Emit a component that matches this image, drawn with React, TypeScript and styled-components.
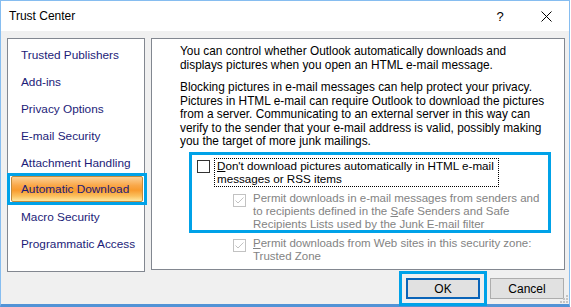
import styled, { createGlobalStyle } from 'styled-components';

const GlobalStyle = createGlobalStyle`
  html, body {
    margin: 0;
    background: #ffffff;
  }
  body {
    font-family: 'Liberation Sans', Arial, sans-serif;
    font-size: 12px;
    color: #000000;
  }
`;

const categories = [
  'Trusted Publishers',
  'Add-ins',
  'Privacy Options',
  'E-mail Security',
  'Attachment Handling',
  'Automatic Download',
  'Macro Security',
  'Programmatic Access',
];

const Checkbox = ({ checked, disabled }: { checked?: boolean; disabled?: boolean }) => (
  <Box $disabled={disabled}>
    {checked && (
      <svg width='11' height='11' viewBox='0 0 11 11'>
        <path d='M1.5 5.5 L4 8 L9.5 2.5' fill='none' stroke={disabled ? '#c2c2c2' : '#222'} strokeWidth='1' />
      </svg>
    )}
  </Box>
);

const App = () => {
  return (
    <>
      <GlobalStyle />
      <Window>
        <TitleBar>
          <Title>Trust Center</Title>
          <Controls>
            <CaptionButton>?</CaptionButton>
            <CaptionButton>
              <svg width='11' height='11' viewBox='0 0 11 11'>
                <path d='M0.5 0.5 L10.5 10.5 M10.5 0.5 L0.5 10.5' stroke='#000' strokeWidth='1' />
              </svg>
            </CaptionButton>
          </Controls>
        </TitleBar>

        <Body>
          <Panels>
            <CategoryList>
              {categories.map(name => (
                <Category key={name} $selected={name === 'Automatic Download'}>
                  {name}
                </Category>
              ))}
            </CategoryList>

            <Settings>
              <Paragraph>
                You can control whether Outlook automatically downloads and
                <br />
                displays pictures when you open an HTML e-mail message.
              </Paragraph>
              <Paragraph $gap={9}>
                Blocking pictures in e-mail messages can help protect your privacy.
                <br />
                Pictures in HTML e-mail can require Outlook to download the pictures
                <br />
                from a server. Communicating to an external server in this way can
                <br />
                verify to the sender that your e-mail address is valid, possibly making
                <br />
                you the target of more junk mailings.
              </Paragraph>

              <Highlight>
                <OptionRow>
                  <Checkbox />
                  <FocusLabel>
                    <u>D</u>on't download pictures automatically in HTML e-mail
                    <br />
                    messages or RSS items
                  </FocusLabel>
                </OptionRow>
                <OptionRow $indent={36} $gap={5}>
                  <Checkbox checked disabled />
                  <OptionLabel $disabled>
                    Permit downloads in e-mail messages from senders and
                    <br />
                    to recipients defined in the <u>S</u>afe Senders and Safe
                    <br />
                    Recipients Lists used by the Junk E-mail filter
                  </OptionLabel>
                </OptionRow>
              </Highlight>

              <OptionRow $indent={53} $gap={7}>
                <Checkbox checked disabled />
                <OptionLabel $disabled>
                  <u>P</u>ermit downloads from Web sites in this security zone:
                  <br />
                  Trusted Zone
                </OptionLabel>
              </OptionRow>
            </Settings>
          </Panels>

          <ButtonRow>
            <Button $default>OK</Button>
            <Button>Cancel</Button>
          </ButtonRow>
        </Body>

        <SizeGrip>
          <svg width='10' height='10' viewBox='0 0 10 10'>
            {[
              [8, 2],
              [5, 5],
              [8, 5],
              [2, 8],
              [5, 8],
              [8, 8],
            ].map(([x, y]) => (
              <rect key={`${x}-${y}`} x={x} y={y} width='2' height='2' fill='#c4c4c4' />
            ))}
          </svg>
        </SizeGrip>
      </Window>
    </>
  );
};

const Window = styled.div`
  position: relative;
  box-sizing: border-box;
  width: 570px;
  height: 307px;
  display: flex;
  flex-direction: column;
  background: #f0f0f0;
  border: 1px solid #86bdf0;
  border-bottom: 3px solid #5293d6;
`;

const TitleBar = styled.div`
  height: 30px;
  display: flex;
  align-items: center;
  justify-content: space-between;
  background: #ffffff;
  padding-left: 8px;
`;

const Title = styled.span`
  font-size: 12px;
  color: #000000;
`;

const Controls = styled.div`
  display: flex;
  height: 100%;
`;

const CaptionButton = styled.div`
  width: 46px;
  height: 100%;
  display: flex;
  align-items: center;
  justify-content: center;
  font-size: 13px;
  color: #000000;
`;

const Body = styled.div`
  flex: 1;
  display: flex;
  flex-direction: column;
  padding: 7px 4px 0 6px;
`;

const Panels = styled.div`
  display: flex;
  align-items: flex-start;
  gap: 6px;
`;

const CategoryList = styled.div`
  box-sizing: border-box;
  width: 138px;
  height: 234px;
  padding-top: 2px;
  background: #ffffff;
  border: 1px solid #828790;
`;

const Category = styled.div<{ $selected?: boolean }>`
  position: relative;
  box-sizing: border-box;
  height: 27px;
  margin: 0 1px 0 3px;
  padding-left: 10px;
  display: flex;
  align-items: center;
  font-size: 11.8px;
  color: #1c1c78;
  white-space: nowrap;

  ${p =>
    p.$selected &&
    `
    height: 26px;
    margin-bottom: 1px;
    padding-left: 9px;
    border: 1px solid #c18a3c;
    border-radius: 2px;
    background: linear-gradient(#fcd196 0%, #f9a84a 35%, #f89b2e 55%, #fbc15f 80%, #fee8a2 100%);

    &::after {
      content: '';
      position: absolute;
      top: -4px;
      bottom: -4px;
      left: -5px;
      right: -5px;
      border: 3px solid #00a2e8;
    }
  `}
`;

const Settings = styled.div`
  box-sizing: border-box;
  width: 414px;
  height: 232px;
  padding: 6px 10px 0 28px;
  background: #ffffff;
  border: 1px solid #828790;
`;

const Paragraph = styled.p<{ $gap?: number }>`
  margin: ${p => p.$gap ?? 0}px 0 0 0;
  font-size: 11.85px;
  line-height: 13.5px;
  white-space: nowrap;
`;

const Highlight = styled.div`
  box-sizing: border-box;
  width: 356px;
  height: 75px;
  margin: 6px 0 0 12px;
  padding: 3px 0 0 5px;
  outline: 3px solid #00a2e8;
`;

const OptionRow = styled.div<{ $indent?: number; $gap?: number }>`
  display: flex;
  align-items: flex-start;
  margin-left: ${p => p.$indent ?? 0}px;
  margin-top: ${p => p.$gap ?? 0}px;
`;

const Box = styled.span<{ $disabled?: boolean }>`
  box-sizing: border-box;
  flex: none;
  width: 13px;
  height: 13px;
  margin-top: 2px;
  display: flex;
  align-items: center;
  justify-content: center;
  background: #ffffff;
  border: 1px solid ${p => (p.$disabled ? '#c2c2c2' : '#333333')};
`;

const OptionLabel = styled.span<{ $disabled?: boolean }>`
  margin-left: 7px;
  font-size: 11.5px;
  line-height: 13px;
  white-space: nowrap;
  color: ${p => (p.$disabled ? '#838383' : '#000000')};
`;

const FocusLabel = styled.span`
  margin-left: 4px;
  padding: 0 4px 0 2px;
  font-size: 11.65px;
  line-height: 13.5px;
  white-space: nowrap;
  border: 1px dotted #000000;
`;

const ButtonRow = styled.div`
  display: flex;
  justify-content: flex-end;
  gap: 10px;
  margin-top: 6px;
  padding-right: 1px;
`;

const Button = styled.div<{ $default?: boolean }>`
  box-sizing: border-box;
  width: 74px;
  height: 21px;
  display: flex;
  align-items: center;
  justify-content: center;
  background: #e1e1e1;
  border: ${p => (p.$default ? '2px solid #0a64b8' : '1px solid #adadad')};
  ${p => p.$default && 'outline: 3px solid #00a2e8; outline-offset: 4px;'}
`;

const SizeGrip = styled.div`
  position: absolute;
  right: 1px;
  bottom: 1px;
  line-height: 0;
`;

export default App;
